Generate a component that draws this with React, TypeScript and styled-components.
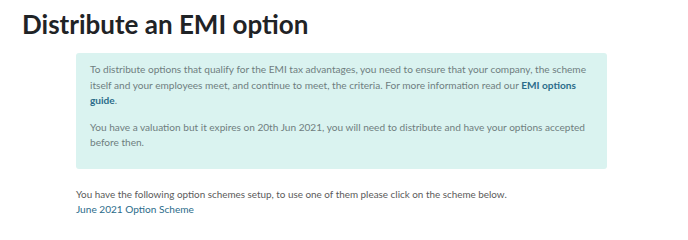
import React from "react";
import styled, { createGlobalStyle } from "styled-components";

const Global = createGlobalStyle`
  html, body { margin: 0; padding: 0; background: #fff; }
  body { font-family: Lato, "Noto Sans", sans-serif; color: #4a4a4a; }
`;

const Page = styled.div`
  padding: 6px 22px 0 22px;
`;

const Title = styled.h1`
  margin: 0;
  font-size: 26px;
  line-height: 36px;
  font-weight: 700;
  color: #1f2326;
`;

const Content = styled.div`
  padding-left: 54px;
  width: 531px;
`;

const Notice = styled.div`
  margin-top: 11px;
  background: #daf3f0;
  border-radius: 3px;
  padding: 9px 14px 14px 14px;
  height: 116px;
  box-sizing: border-box;
`;

const NoticeText = styled.p`
  margin: 0 0 11px 0;
  font-size: 10.1px;
  line-height: 15.5px;
  color: #6f7e7f;
`;

const Link = styled.a`
  color: #2b6c8a;
  font-weight: 700;
  text-decoration: none;
`;

const Body = styled.div`
  margin-top: 18px;
  font-size: 9.9px;
  line-height: 15px;
  color: #5a5a5a;
`;

const SchemeLink = styled.a`
  display: block;
  color: #2b6c8a;
  font-size: 10.1px;
  text-decoration: none;
`;

export default function App() {
  return (
    <>
      <Global />
      <Page>
        <Title>Distribute an EMI option</Title>
        <Content>
          <Notice>
            <NoticeText>
              To distribute options that qualify for the EMI tax advantages, you need to ensure that your company, the scheme
              itself and your employees meet, and continue to meet, the criteria. For more information read our{" "}
              <Link href="#">EMI options guide</Link>.
            </NoticeText>
            <NoticeText>
              You have a valuation but it expires on 20th Jun 2021, you will need to distribute and have your options accepted
              before then.
            </NoticeText>
          </Notice>
          <Body>
            You have the following option schemes setup, to use one of them please click on the scheme below.
            <SchemeLink href="#">June 2021 Option Scheme</SchemeLink>
          </Body>
        </Content>
      </Page>
    </>
  );
}
